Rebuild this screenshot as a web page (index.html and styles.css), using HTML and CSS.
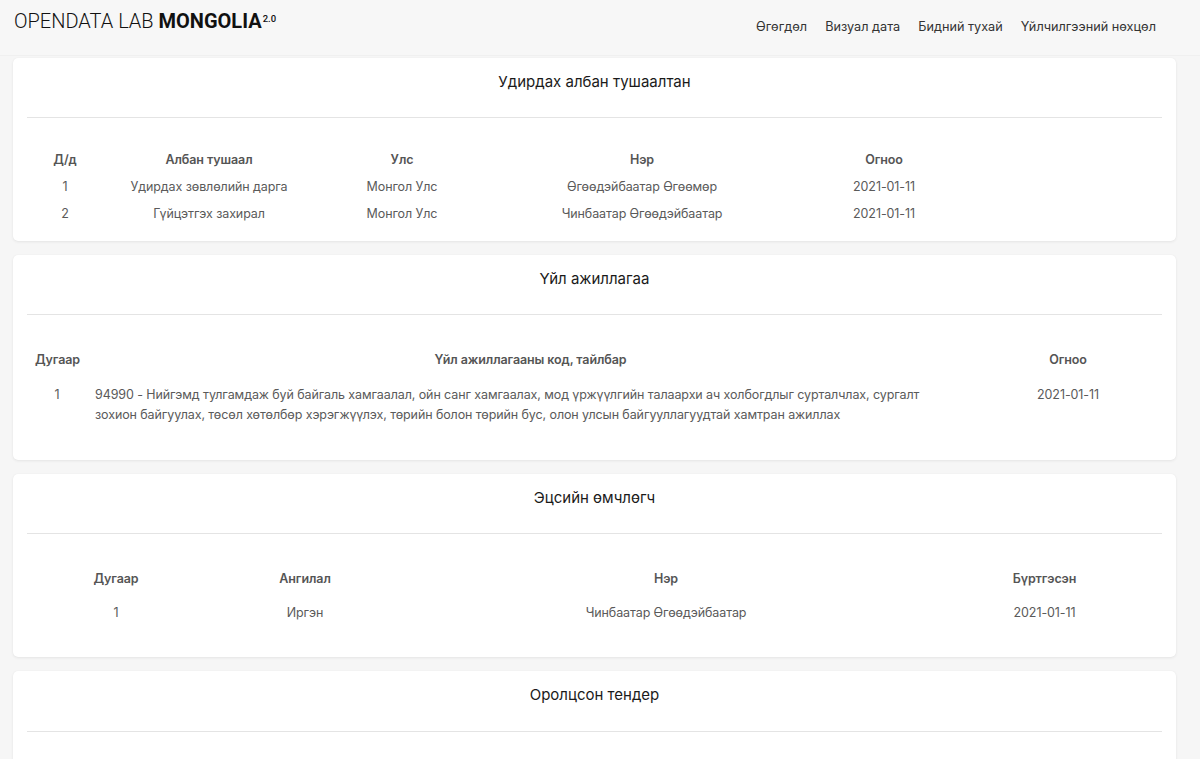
FILE: index.html
```html
<!DOCTYPE html>
<html lang="mn">
<head>
<meta charset="utf-8">
<title>Opendata Lab Mongolia</title>
<link rel="stylesheet" href="styles.css">
</head>
<body>
<header class="topbar">
  <div class="logo"><span class="logo-light">OPENDATA LAB </span><span class="logo-bold">MONGOLIA</span><sup class="logo-ver">2.0</sup></div>
  <nav class="nav">
    <a href="#">Өгөгдөл</a>
    <a href="#">Визуал дата</a>
    <a href="#">Бидний тухай</a>
    <a href="#">Үйлчилгээний нөхцөл</a>
  </nav>
</header>
<main class="content">
  <section class="card card-compact">
    <h2 class="card-title">Удирдах албан тушаалтан</h2>
    <hr class="card-rule">
    <table class="tbl tbl-compact">
      <colgroup><col class="c1-1"><col class="c1-2"><col class="c1-3"><col class="c1-4"><col class="c1-5"><col></colgroup>
      <thead><tr><th>Д/д</th><th>Албан тушаал</th><th>Улс</th><th>Нэр</th><th>Огноо</th><th></th></tr></thead>
      <tbody>
        <tr><td>1</td><td>Удирдах зөвлөлийн дарга</td><td>Монгол Улс</td><td>Өгөөдэйбаатар Өгөөмөр</td><td>2021-01-11</td><td></td></tr>
        <tr><td>2</td><td>Гүйцэтгэх захирал</td><td>Монгол Улс</td><td>Чинбаатар Өгөөдэйбаатар</td><td>2021-01-11</td><td></td></tr>
      </tbody>
    </table>
  </section>

  <section class="card">
    <h2 class="card-title">Үйл ажиллагаа</h2>
    <hr class="card-rule">
    <table class="tbl">
      <colgroup><col class="c2-1"><col><col class="c2-3"></colgroup>
      <thead><tr><th>Дугаар</th><th>Үйл ажиллагааны код, тайлбар</th><th>Огноо</th></tr></thead>
      <tbody>
        <tr><td class="top">1</td><td class="desc">94990 - Нийгэмд тулгамдаж буй байгаль хамгаалал, ойн санг хамгаалах, мод үржүүлгийн талаархи ач холбогдлыг сурталчлах, сургалт зохион байгуулах, төсөл хөтөлбөр хэрэгжүүлэх, төрийн болон төрийн бус, олон улсын байгууллагуудтай хамтран ажиллах</td><td class="top">2021-01-11</td></tr>
      </tbody>
    </table>
  </section>

  <section class="card">
    <h2 class="card-title">Эцсийн өмчлөгч</h2>
    <hr class="card-rule">
    <table class="tbl">
      <colgroup><col class="c3-1"><col class="c3-2"><col><col class="c3-4"></colgroup>
      <thead><tr><th>Дугаар</th><th>Ангилал</th><th>Нэр</th><th>Бүртгэсэн</th></tr></thead>
      <tbody>
        <tr><td>1</td><td>Иргэн</td><td>Чинбаатар Өгөөдэйбаатар</td><td>2021-01-11</td></tr>
      </tbody>
    </table>
  </section>

  <section class="card card-last">
    <h2 class="card-title">Оролцсон тендер</h2>
    <hr class="card-rule">
  </section>
</main>
</body>
</html>
```
FILE: styles.css
```css
* { box-sizing: border-box; }
html, body { margin: 0; padding: 0; }
body {
  background: #f6f6f6;
  font-family: Inter, "Noto Sans", "Liberation Sans", sans-serif;
  color: #555;
  height: 759px;
  overflow: hidden;
}
.topbar {
  height: 56px;
  display: flex;
  align-items: flex-start;
  justify-content: space-between;
  padding: 0 44px 0 14px;
  background: #f7f7f7;
  border-bottom: 1px solid #f0f0f0;
}
.logo {
  font-family: Roboto, "Liberation Sans", sans-serif;
  font-size: 20px;
  line-height: 24px;
  color: #111;
  padding-top: 9px;
}
.logo-light { font-weight: 300; }
.logo-bold { font-weight: 700; }
.logo-ver {
  font-size: 9.5px;
  font-weight: 500;
  vertical-align: top;
  position: relative;
  top: -2px;
  margin-left: 1px;
}
.nav {
  display: flex;
  gap: 18px;
  padding-top: 18px;
}
.nav a {
  font-size: 12.7px;
  line-height: 18px;
  color: #333;
  text-decoration: none;
}
.content {
  display: flex;
  flex-direction: column;
  gap: 14px;
  padding: 2px 24px 0 13px;
}
.card {
  background: #fff;
  border-radius: 5px;
  box-shadow: 0 1px 3px rgba(0,0,0,0.07), 0 0 1px rgba(0,0,0,0.05);
  padding: 15px 14px 27px;
}
.card-compact { padding-bottom: 14px; }
.card-title {
  margin: 0;
  text-align: center;
  font-size: 15px;
  line-height: 18px;
  font-weight: 400;
  color: #1a1a1a;
}
.card-rule {
  margin: 26px 0 0;
  border: 0;
  border-top: 1px solid #e4e4e4;
  height: 0;
}
.card-last { padding-bottom: 40px; }
.card-last .card-rule { margin-top: 27px; }
.tbl {
  width: 100%;
  border-collapse: collapse;
  table-layout: fixed;
  margin-top: 28px;
  font-size: 12.5px;
  letter-spacing: -0.1px;
}
.tbl th {
  font-weight: 600;
  color: #555;
  text-align: center;
  padding: 8px 8px;
  line-height: 18px;
}
.tbl td {
  text-align: center;
  padding: 8px 8px;
  line-height: 18px;
  color: #5a5a5a;
}
.tbl td.top { vertical-align: top; line-height: 20px; }
.tbl td.desc { text-align: left; line-height: 20px; padding-right: 24px; }
.tbl-compact th, .tbl-compact td { padding: 4.5px 8px; }
.c1-1 { width: 76px; }
.c1-2 { width: 212px; }
.c1-3 { width: 174px; }
.c1-4 { width: 306px; }
.c1-5 { width: 178px; }
.c2-1 { width: 60px; }
.c2-3 { width: 188px; }
.c3-1 { width: 178px; }
.c3-2 { width: 200px; }
.c3-4 { width: 235px; }
```
